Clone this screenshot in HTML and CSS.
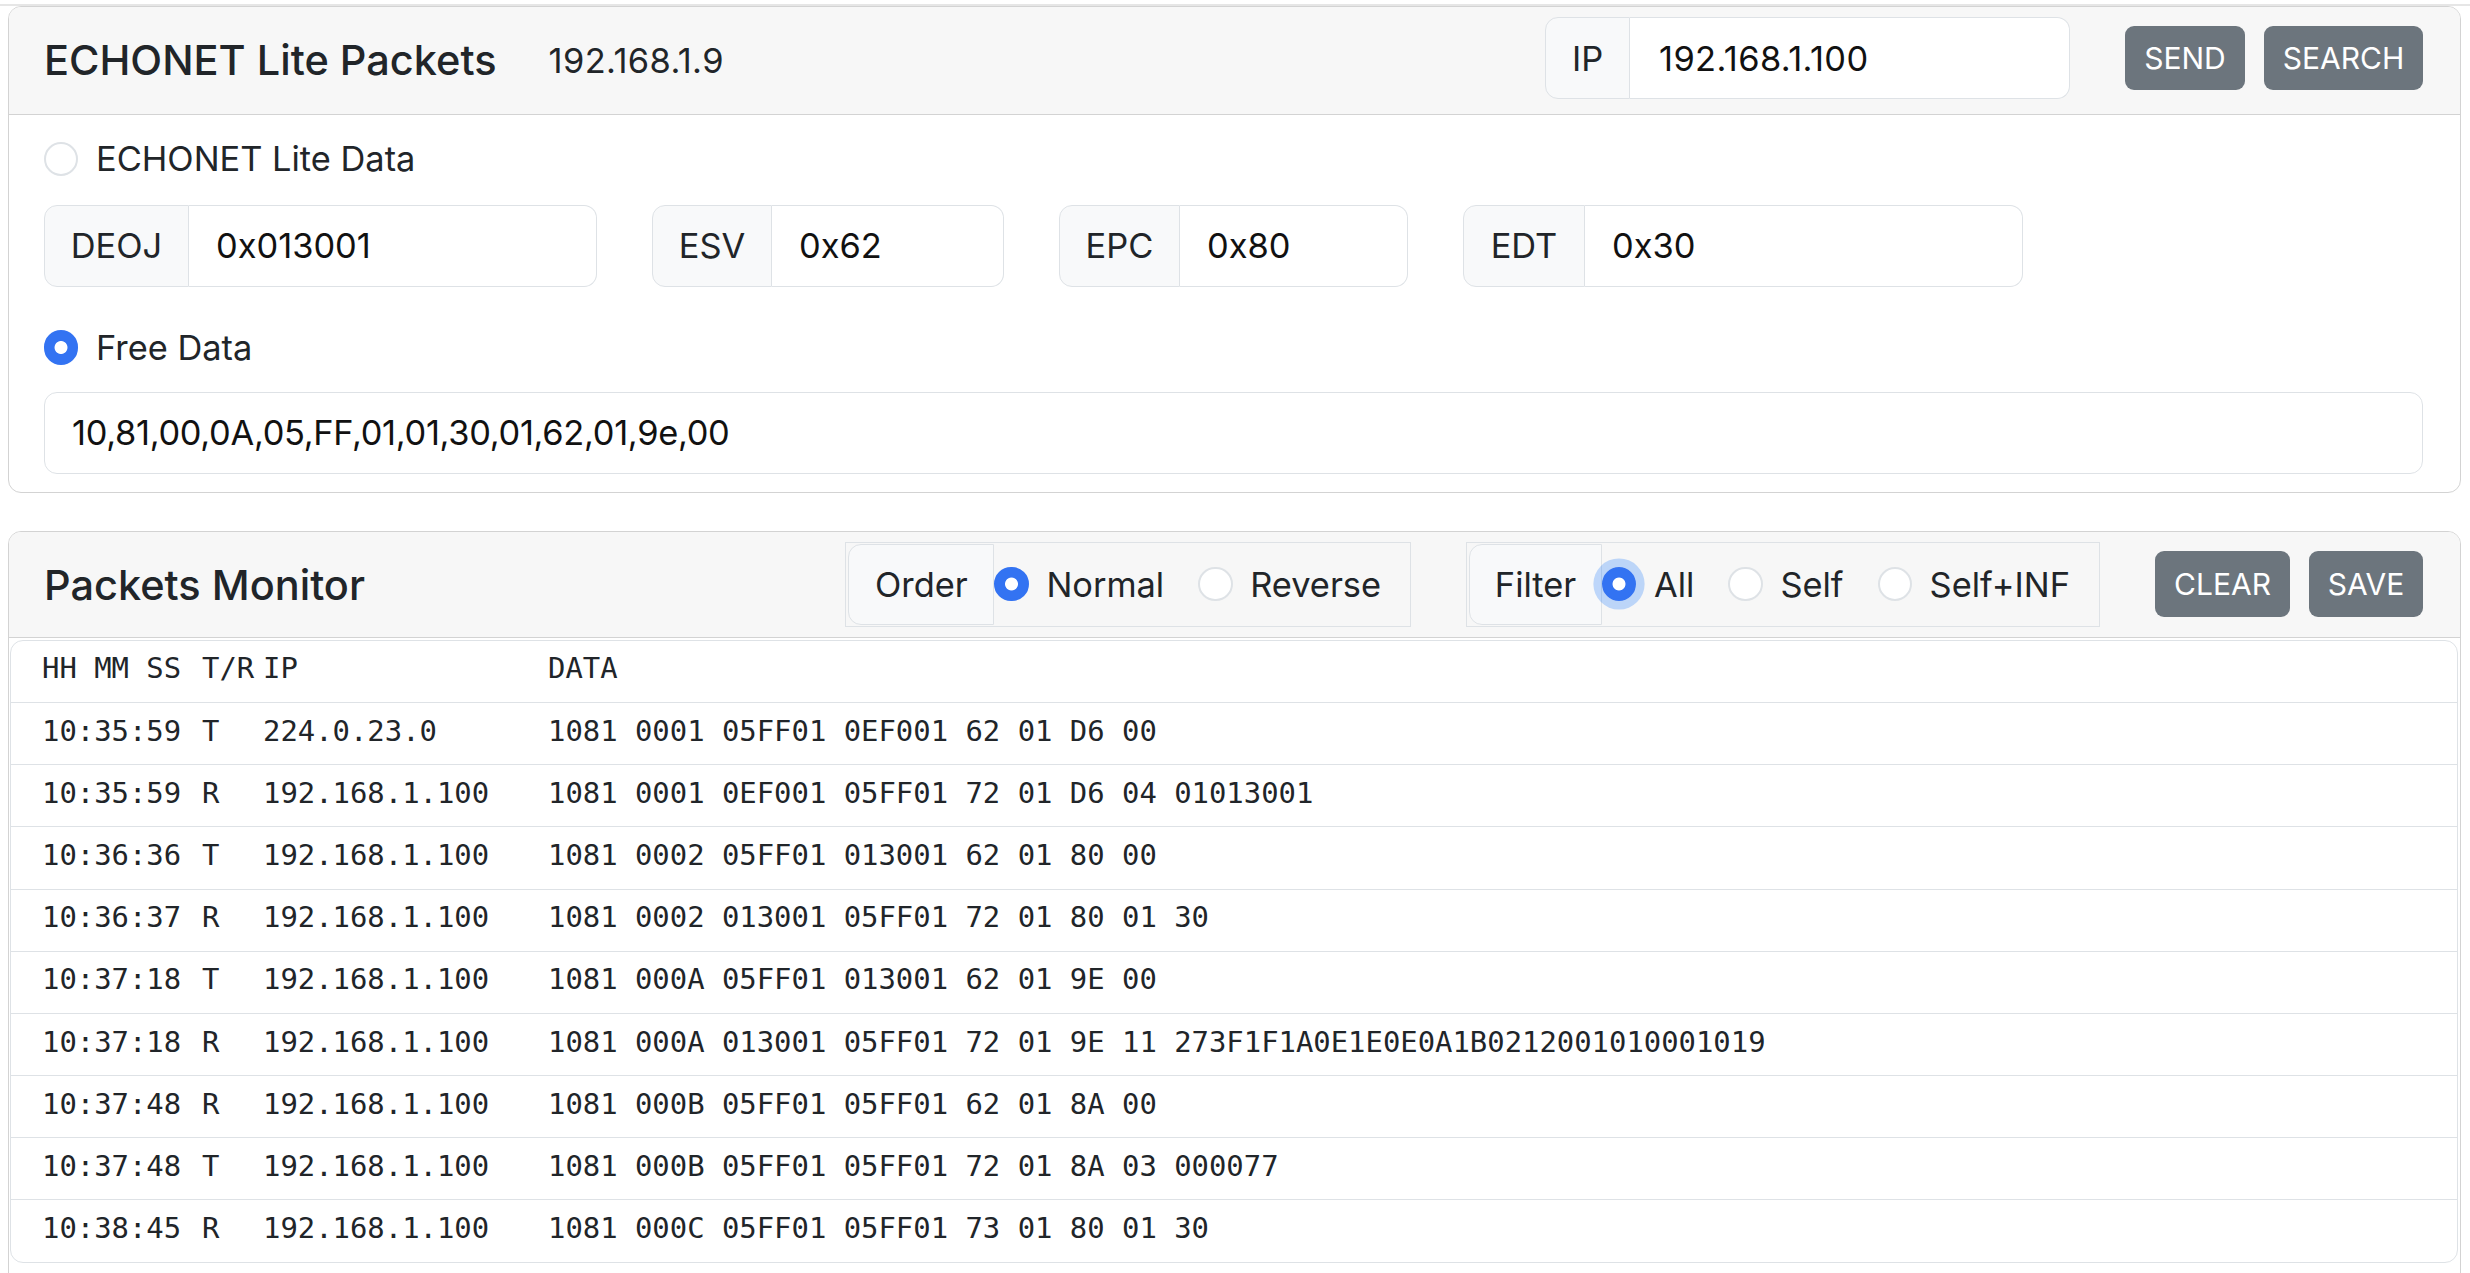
FILE: index.html
```html
<!DOCTYPE html>
<html lang="en">
<head>
<meta charset="utf-8">
<title>ECHONET Lite Packets</title>
<link rel="stylesheet" href="styles.css">
</head>
<body>
<div class="topline"></div>
<div class="page">
  <section class="card card-send">
    <header class="card-header">
      <h5 class="title">ECHONET Lite Packets</h5>
      <span class="self-ip">192.168.1.9</span>
      <div class="input-group ip-group">
        <span class="ig-text w-ip">IP</span>
        <input class="ig-input" type="text" value="192.168.1.100">
      </div>
      <div class="btns">
        <button class="btn w-send">SEND</button>
        <button class="btn w-search">SEARCH</button>
      </div>
    </header>
    <div class="card-body">
      <label class="form-check"><input class="radio" type="radio" name="mode">ECHONET Lite Data</label>
      <div class="fields">
        <div class="input-group f-deoj"><span class="ig-text w-deoj">DEOJ</span><input class="ig-input" type="text" value="0x013001"></div>
        <div class="input-group f-esv"><span class="ig-text w-esv">ESV</span><input class="ig-input" type="text" value="0x62"></div>
        <div class="input-group f-epc"><span class="ig-text w-epc">EPC</span><input class="ig-input" type="text" value="0x80"></div>
        <div class="input-group f-edt"><span class="ig-text w-edt">EDT</span><input class="ig-input" type="text" value="0x30"></div>
      </div>
      <label class="form-check second"><input class="radio" type="radio" name="mode" checked>Free Data</label>
      <input class="free-input" type="text" value="10,81,00,0A,05,FF,01,01,30,01,62,01,9e,00">
    </div>
  </section>

  <section class="card card-monitor">
    <header class="card-header hdr2">
      <h5 class="title">Packets Monitor</h5>
      <div class="radio-group g-order">
        <span class="rg-label w-order">Order</span>
        <label class="opt"><input class="radio" type="radio" name="order" checked>Normal</label>
        <label class="opt"><input class="radio" type="radio" name="order">Reverse</label>
      </div>
      <div class="radio-group g-filter">
        <span class="rg-label w-filter">Filter</span>
        <label class="opt"><input class="radio focus" type="radio" name="filter" checked>All</label>
        <label class="opt"><input class="radio" type="radio" name="filter">Self</label>
        <label class="opt"><input class="radio" type="radio" name="filter">Self+INF</label>
      </div>
      <div class="btns btns2">
        <button class="btn btn-tall w-clear">CLEAR</button>
        <button class="btn btn-tall w-save">SAVE</button>
      </div>
    </header>
    <div class="card-body2">
      <div class="log">
        <div class="row"><span>HH MM SS</span><span>T/R</span><span>IP</span><span>DATA</span></div>
        <div class="row"><span>10:35:59</span><span>T</span><span>224.0.23.0</span><span>1081 0001 05FF01 0EF001 62 01 D6 00</span></div>
        <div class="row"><span>10:35:59</span><span>R</span><span>192.168.1.100</span><span>1081 0001 0EF001 05FF01 72 01 D6 04 01013001</span></div>
        <div class="row"><span>10:36:36</span><span>T</span><span>192.168.1.100</span><span>1081 0002 05FF01 013001 62 01 80 00</span></div>
        <div class="row"><span>10:36:37</span><span>R</span><span>192.168.1.100</span><span>1081 0002 013001 05FF01 72 01 80 01 30</span></div>
        <div class="row"><span>10:37:18</span><span>T</span><span>192.168.1.100</span><span>1081 000A 05FF01 013001 62 01 9E 00</span></div>
        <div class="row"><span>10:37:18</span><span>R</span><span>192.168.1.100</span><span>1081 000A 013001 05FF01 72 01 9E 11 273F1F1A0E1E0E0A1B0212001010001019</span></div>
        <div class="row"><span>10:37:48</span><span>R</span><span>192.168.1.100</span><span>1081 000B 05FF01 05FF01 62 01 8A 00</span></div>
        <div class="row"><span>10:37:48</span><span>T</span><span>192.168.1.100</span><span>1081 000B 05FF01 05FF01 72 01 8A 03 000077</span></div>
        <div class="row"><span>10:38:45</span><span>R</span><span>192.168.1.100</span><span>1081 000C 05FF01 05FF01 73 01 80 01 30</span></div>
      </div>
    </div>
  </section>
</div>
</body>
</html>
```

FILE: styles.css
```css
html, body {
  margin: 0;
  height: 100%;
  overflow: hidden;
  background: #fff;
}
body {
  font-family: Inter, "Noto Sans", "Liberation Sans", sans-serif;
  font-size: 34.4px;
  color: #212529;
}
.topline {
  height: 2px;
  margin-top: 4px;
  background: #e6e6e6;
}
.page {
  padding: 0 9px 0 8px;
}
.card {
  border: 1px solid #d3d3d3;
  border-radius: 13px;
  background: #fff;
  overflow: hidden;
}
.card-monitor {
  margin-top: 38px;
  padding-bottom: 60px;
}
.card-header {
  display: flex;
  align-items: center;
  background: #f7f7f7;
  border-bottom: 1px solid #d3d3d3;
  padding: 10px 37px 15px 35px;
}
.hdr2 {
  padding: 10px 37px 10px 35px;
}
.title {
  margin: 6px 0 0 0;
  font-size: 41.5px;
  font-weight: 500;
  line-height: 1.2;
  color: #212529;
}
.hdr2 .title {
  margin-top: 4px;
}
.self-ip {
  margin-left: 52px;
  margin-top: 4px;
  font-size: 34.4px;
  letter-spacing: 0.4px;
}
.input-group {
  display: flex;
  height: 82px;
  box-sizing: border-box;
}
.ip-group {
  margin-left: auto;
  width: 525px;
}
.ig-text {
  display: flex;
  align-items: center;
  justify-content: center;
  box-sizing: border-box;
  flex: none;
  background: #f8f9fa;
  border: 1px solid #dee2e6;
  border-radius: 13px 0 0 13px;
  color: #212529;
}
.w-ip { width: 85px; }
.w-deoj { width: 145px; }
.w-esv { width: 120px; }
.w-epc { width: 121px; }
.w-edt { width: 122px; }
.ig-input {
  flex: 1;
  min-width: 0;
  margin: 0;
  box-sizing: border-box;
  height: 82px;
  border: 1px solid #dee2e6;
  border-left: 0;
  border-radius: 0 13px 13px 0;
  padding: 0 26px 0 27px;
  font-family: inherit;
  font-size: 34.4px;
  color: #111;
  background: #fff;
  outline: none;
}
.ip-group .ig-input {
  padding-left: 29px;
  letter-spacing: 0.4px;
}
.btns {
  display: flex;
  flex: none;
  gap: 19px;
  margin-left: 55px;
}
.btn {
  height: 64px;
  border: 0;
  border-radius: 9px;
  background: #6c757d;
  color: #fff;
  font-family: inherit;
  font-size: 30px;
  padding: 0;
  text-align: center;
}
.btn-tall { height: 66px; }
.w-send { width: 120px; }
.w-search { width: 159px; }
.w-clear { width: 135px; }
.w-save { width: 114px; }

.card-body {
  padding: 18px 37px 18px 35px;
}
.form-check {
  display: flex;
  align-items: center;
  gap: 17.6px;
  height: 51.6px;
}
.form-check.second {
  margin-top: 35px;
}
.radio {
  -webkit-appearance: none;
  appearance: none;
  margin: 0;
  flex: none;
  width: 34.4px;
  height: 34.4px;
  box-sizing: border-box;
  border-radius: 50%;
  border: 2px solid #dee2e6;
  background: #fff;
}
.radio:checked {
  border-color: #3373f2;
  background: radial-gradient(circle closest-side, #fff 0 40%, #3373f2 46%);
}
.radio.focus {
  box-shadow: 0 0 0 8.6px rgba(13, 110, 253, 0.25);
}
.fields {
  display: flex;
  gap: 55px;
  margin-top: 20px;
}
.f-deoj { width: 553px; }
.f-esv { width: 352px; }
.f-epc { width: 349px; }
.f-edt { width: 560px; }
.free-input {
  display: block;
  margin: 18.6px 0 0 0;
  width: 100%;
  height: 82px;
  box-sizing: border-box;
  border: 1px solid #dee2e6;
  border-radius: 13px;
  padding: 0 27px;
  font-family: inherit;
  font-size: 34.4px;
  letter-spacing: -0.3px;
  color: #111;
  background: #fff;
  outline: none;
}

.radio-group {
  display: flex;
  flex: none;
  align-items: center;
  box-sizing: border-box;
  height: 85px;
  border: 1px solid #dee2e6;
  padding: 1px 1px 1px 2px;
}
.g-order {
  margin-left: auto;
}
.g-filter {
  margin-left: 55px;
}
.rg-label {
  display: flex;
  flex: none;
  align-items: center;
  justify-content: center;
  align-self: stretch;
  box-sizing: border-box;
  background: #f8f9fa;
  border: 1px solid #dee2e6;
  border-radius: 13px 0 0 13px;
}
.w-order { width: 146px; }
.w-filter { width: 133px; }
.opt {
  display: flex;
  flex: none;
  align-items: center;
  gap: 17.6px;
  margin-right: 34px;
}
.opt:last-child {
  margin-right: 28px;
}

.card-body2 {
  padding: 0;
}
.log {
  margin: 2px 2px 0 1px;
  border: 1px solid #dee2e6;
  border-radius: 13px;
  font-family: "DejaVu Sans Mono", "Liberation Mono", monospace;
  font-size: 28.9px;
  color: #212529;
}
.row {
  display: grid;
  grid-template-columns: 160px 61px 285px 1fr;
  white-space: pre;
  line-height: 44px;
  padding: 5.6px 31px 11.6px;
  border-bottom: 1px solid #dee2e6;
}
.row:last-child {
  border-bottom: 0;
}
```
